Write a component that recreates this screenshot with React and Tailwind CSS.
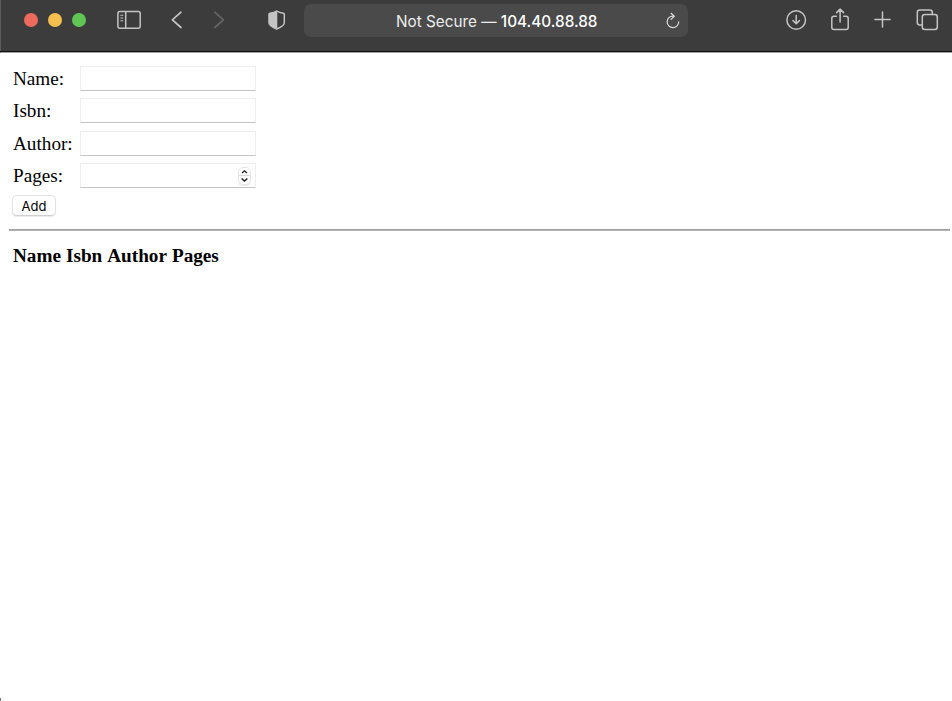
import React from "react";

function WindowControls() {
  return (
    <div className="ml-[24px] flex gap-[10px]">
      <span className="size-[14px] rounded-full bg-[#ed6a5e]" />
      <span className="size-[14px] rounded-full bg-[#f5bf4f]" />
      <span className="size-[14px] rounded-full bg-[#61c554]" />
    </div>
  );
}

function Icon({ className, size, children }) {
  return (
    <svg
      className={`block shrink-0 ${className}`}
      width={size[0]}
      height={size[1]}
      viewBox={`0 0 ${size[0]} ${size[1]}`}
      fill="none"
      stroke="currentColor"
      strokeWidth="1.5"
      strokeLinecap="round"
      strokeLinejoin="round"
    >
      {children}
    </svg>
  );
}

function Toolbar() {
  return (
    <header className="h-[53px] border-b border-l border-b-[#a0a0a0] border-l-[#5c5c5c] bg-[#3c3c3c] text-[#c4c4c4]">
      <div className="-ml-px flex h-[52px] items-start border-b border-[#111111]">
        <div className="flex h-[40px] items-center">
          <WindowControls />
          <Icon className="ml-[31px]" size={[24, 20]}>
            <rect x="0.9" y="1.5" width="22.3" height="16.7" rx="2" />
            <path d="M8.7 1.8v16.2" />
            <path d="M3.8 5.3h2M3.8 8h2M3.8 10.7h2" strokeWidth="1.1" />
          </Icon>
          <Icon className="ml-[29px]" size={[14, 20]}>
            <path d="M11 2.2 2.4 9.8 11 17.5" strokeWidth="1.7" />
          </Icon>
          <Icon className="ml-[29px] text-[#656565]" size={[14, 20]}>
            <path d="M1.8 2.2 10.4 9.8 1.8 17.5" strokeWidth="1.7" />
          </Icon>
          <Icon className="ml-[41px]" size={[18, 20]}>
            <path d="M8.7 1C6.8 2.4 4.1 3 1.9 3.2Q1 3.3 1 4.3V13C1 15.6 5.4 17.6 8.7 19.1 12 17.6 16.3 15.6 16.3 13V4.3Q16.3 3.3 15.4 3.2C13.2 3 10.6 2.4 8.7 1Z" />
            <path d="M9.3 1C6.8 2.4 4.1 3 1.9 3.2Q1 3.3 1 4.3V13C1 15.6 5.4 17.6 9.3 19.1Z" fill="currentColor" stroke="none" />
          </Icon>
        </div>
        <div className="mt-[4px] ml-[18px] flex h-[33px] w-[384px] items-center rounded-[7px] bg-[#4a4a4a] pl-[92px] font-[Inter,sans-serif] text-[15.3px] text-[#ededed]">
          <span className="w-[202px] whitespace-nowrap pt-[4px]">
            Not Secure — <span className="font-medium text-white">104.40.88.88</span>
          </span>
          <Icon className="ml-[68px] mt-[1px] text-[#dddddd]" size={[14, 18]}>
            <path d="M7.5 4.2C3.8 3.9 1.1 6.5 1.1 9.8 1.1 13.1 3.7 15.6 6.9 15.6 10.2 15.6 12.7 13 12.7 9.8M5.1 1.3 8.3 4.3 5.1 7.4" strokeWidth="1.2" />
          </Icon>
        </div>
        <div className="flex h-[40px] items-center">
          <Icon className="ml-[97px]" size={[22, 22]}>
            <circle cx="11.2" cy="11" r="9.3" />
            <path d="M11.2 6.5v8M8 11.6l3.2 3.1 3.2-3.1" />
          </Icon>
          <Icon className="ml-[23px]" size={[20, 24]}>
            <path d="M6.3 8.3H4.1Q1.8 8.3 1.8 10.4V19.5Q1.8 21.5 4.1 21.5H16Q18.2 21.5 18.2 19.5V10.4Q18.2 8.3 16 8.3H13.8M10.1 14V1.3M6.6 4.6 10.1 1.1 13.6 4.6" />
          </Icon>
          <Icon className="ml-[23px]" size={[18, 20]}>
            <path d="M1.9 9.5H17.1M9.5 1.9V17.1" />
          </Icon>
          <Icon className="ml-[25px]" size={[24, 22]}>
            <path d="M6.3 16H3.7Q1.3 16 1.3 13.6V3.4Q1.3 1 3.7 1H13.9Q16.3 1 16.3 3.4V5.6" />
            <rect x="6.3" y="5.6" width="15" height="14.8" rx="2.5" />
          </Icon>
        </div>
      </div>
    </header>
  );
}

function Stepper() {
  return (
    <span className="mr-[4px] flex h-[18px] w-[13px] flex-col rounded-[5px] border border-[#e6e6e6] text-[#222222] shadow-[0_1px_1px_#e6e6e6]">
      <svg className="h-[8px] w-[11px] border-b border-[#dadada]" viewBox="0 0 11 8" fill="none" stroke="currentColor" strokeWidth="1.5">
        <path d="M2.7 5.8 5.5 3.2 8.3 5.8" />
      </svg>
      <svg className="h-[8px] w-[11px]" viewBox="0 0 11 8" fill="none" stroke="currentColor" strokeWidth="1.5">
        <path d="M2.7 2.5 5.5 5.1 8.3 2.5" />
      </svg>
    </span>
  );
}

function Field({ label, numeric }) {
  return (
    <label className="flex h-[32.4px] items-start">
      <span className="w-[67px] pt-[1px] leading-[24px]">{label}</span>
      {numeric ? (
        <span className="flex h-[25px] w-[176px] items-center justify-end border border-[#eeeeee] border-b-[#c4c4c4]">
          <input type="text" inputMode="numeric" className="w-[140px] outline-none" />
          <Stepper />
        </span>
      ) : (
        <input
          type="text"
          className="block h-[25px] w-[176px] appearance-none rounded-none border border-[#eeeeee] border-b-[#c4c4c4] bg-white px-1 outline-none"
        />
      )}
    </label>
  );
}

export default function App() {
  return (
    <div className="relative h-[701px] w-[952px] overflow-hidden bg-white font-['Liberation_Serif',serif] text-[19.2px] text-black">
      <Toolbar />
      <main>
        <form className="pt-[13px] pl-[13px]" onSubmit={(e) => e.preventDefault()}>
          <Field label="Name:" />
          <Field label="Isbn:" />
          <Field label="Author:" />
          <Field label="Pages:" numeric />
          <button
            type="submit"
            className="-ml-px -mt-[1px] block h-[21px] w-[44px] rounded-[5px] border border-[#e2e2e2] border-b-[#cfcfcf] bg-white font-[Inter,sans-serif] text-[13px] leading-[20px] shadow-[0_1px_1px_#e8e8e8]"
          >
            Add
          </button>
        </form>
        <hr className="mt-[13px] mr-[2px] ml-[9px] h-[2px] border-t border-b border-t-[#a0a0a0] border-b-[#b4b4b4]" />
        <table className="mt-[14px] ml-[13px] border-collapse text-left leading-[22px]">
          <thead>
            <tr>
              <th className="pr-[5px]">Name</th>
              <th className="pr-[5px]">Isbn</th>
              <th className="pr-[5px]">Author</th>
              <th>Pages</th>
            </tr>
          </thead>
        </table>
      </main>
      {/* rounded window corner */}
      <span className="absolute bottom-0 left-0 h-[3px] w-px bg-[#777777]" />
    </div>
  );
}
